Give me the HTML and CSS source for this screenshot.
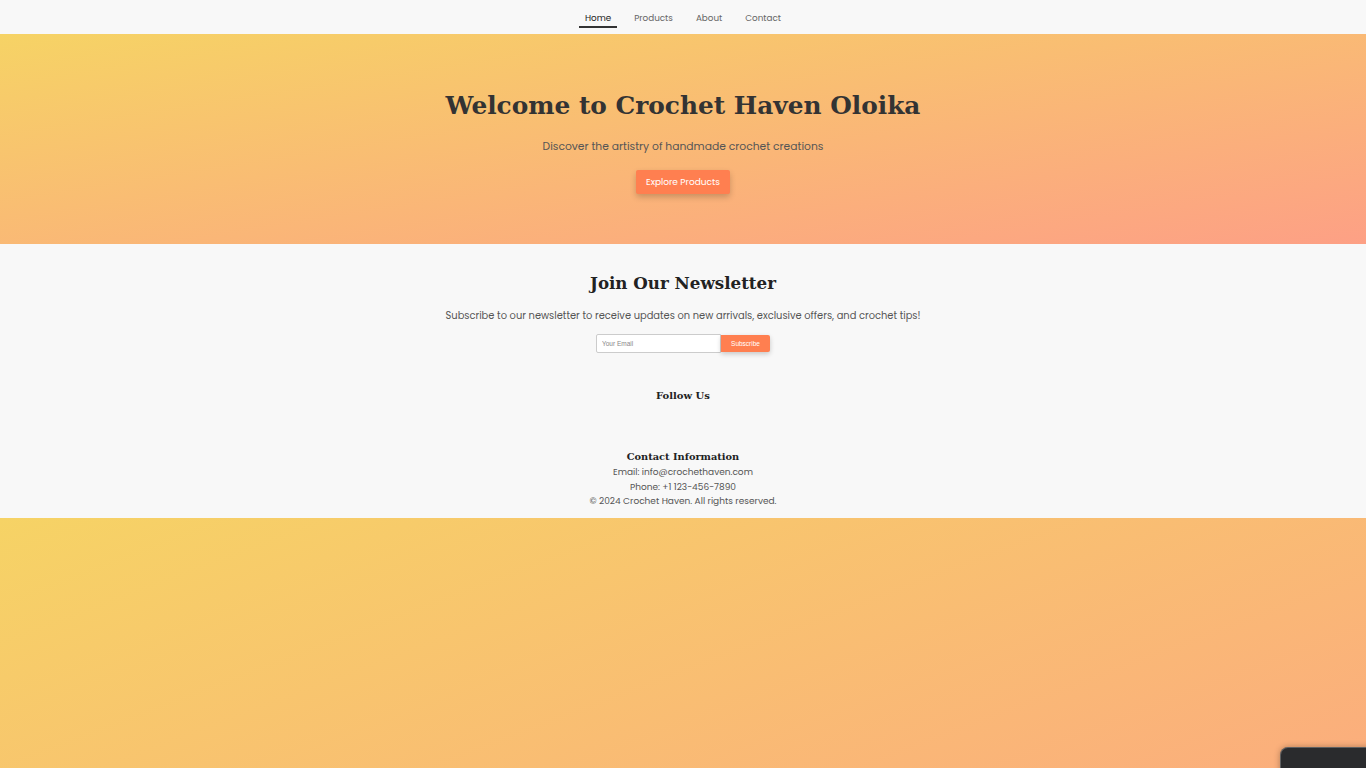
FILE: index.html
```html
<!DOCTYPE html>
<html lang="en">
<head>
<meta charset="utf-8">
<title>Crochet Haven Oloika</title>
<link rel="stylesheet" href="styles.css">
</head>
<body>
<header class="topbar">
  <nav class="nav">
    <a class="nav-link active" href="#">Home</a>
    <a class="nav-link" href="#">Products</a>
    <a class="nav-link" href="#">About</a>
    <a class="nav-link" href="#">Contact</a>
  </nav>
</header>
<section class="hero">
  <h1 class="hero-title">Welcome to Crochet Haven Oloika</h1>
  <p class="hero-sub">Discover the artistry of handmade crochet creations</p>
  <a class="btn-primary" href="#">Explore Products</a>
</section>
<footer class="footer">
  <h2 class="news-title">Join Our Newsletter</h2>
  <p class="news-text">Subscribe to our newsletter to receive updates on new arrivals, exclusive offers, and crochet tips!</p>
  <form class="news-form">
    <input class="news-input" type="email" placeholder="Your Email">
    <button class="news-btn" type="button">Subscribe</button>
  </form>
  <h3 class="follow-title">Follow Us</h3>
  <div class="social"></div>
  <h3 class="contact-title">Contact Information</h3>
  <p class="contact-line">Email: info@crochethaven.com</p>
  <p class="contact-line">Phone: +1 123-456-7890</p>
  <p class="contact-line">© 2024 Crochet Haven. All rights reserved.</p>
</footer>
<div class="widget"></div>
</body>
</html>
```
FILE: styles.css
```css
body {
  margin: 0;
  font-family: "Poppins", "Inter", "Noto Sans", sans-serif;
  color: #333;
  background: linear-gradient(to bottom right, #f6d365, #fda085);
}
.topbar {
  background: #f8f8f8;
  height: 34px;
  display: flex;
  justify-content: center;
  align-items: center;
}
.nav {
  display: flex;
  gap: 11px;
}
.nav-link {
  font-size: 8.8px;
  line-height: 14px;
  color: #666;
  text-decoration: none;
  padding: 4px 6px 1px;
  border-bottom: 2px solid transparent;
}
.nav-link.active {
  color: #222;
  border-bottom-color: #333;
}
.hero {
  height: 210px;
  box-sizing: border-box;
  padding-top: 54px;
  background: linear-gradient(to bottom right, #f6d365, #fda085);
  text-align: center;
}
.hero-title {
  margin: 0;
  font-family: "DejaVu Serif", Georgia, serif;
  font-weight: bold;
  font-size: 24.8px;
  line-height: 36px;
  color: #333;
}
.hero-sub {
  margin: 15px 0 0;
  font-size: 10.75px;
  line-height: 16px;
  color: #555;
}
.btn-primary {
  display: inline-block;
  margin-top: 15px;
  background: #ff7f50;
  color: #fff;
  font-size: 9px;
  line-height: 24px;
  padding: 0 10px;
  border-radius: 2px;
  text-decoration: none;
  box-shadow: 0 3px 6px rgba(0,0,0,0.2);
}
.footer {
  background: #f8f8f8;
  text-align: center;
  padding: 26px 0 9px;
}
.news-title {
  margin: 0;
  font-family: "DejaVu Serif", Georgia, serif;
  font-weight: bold;
  font-size: 16.7px;
  line-height: 26px;
  color: #222;
}
.news-text {
  margin: 13px 0 0;
  font-size: 9.9px;
  line-height: 14px;
  color: #555;
}
.news-form {
  display: flex;
  justify-content: center;
  margin-top: 11px;
}
.news-input {
  width: 125px;
  height: 19px;
  box-sizing: border-box;
  border: 1px solid #ccc;
  border-radius: 2px 0 0 2px;
  padding: 0 5px;
  font-size: 6.5px;
  font-family: "Liberation Sans", sans-serif;
  background: #fff;
}
.news-input::placeholder { color: #888; }
.news-btn {
  width: 49px;
  height: 17px;
  margin-top: 1px;
  border: none;
  border-radius: 0 2px 2px 0;
  background: #ff7f50;
  color: #fff;
  font-size: 6.5px;
  font-family: "Liberation Sans", sans-serif;
  box-shadow: 0 2px 5px rgba(0,0,0,0.2);
  padding: 0;
}
.follow-title {
  margin: 35px 0 0;
  font-family: "DejaVu Serif", Georgia, serif;
  font-weight: bold;
  font-size: 10px;
  line-height: 16px;
  color: #222;
}
.social {
  height: 36px;
}
.contact-title {
  margin: 9px 0 0;
  font-family: "DejaVu Serif", Georgia, serif;
  font-weight: bold;
  font-size: 9.8px;
  line-height: 16px;
  color: #222;
}
.contact-line {
  margin: 0;
  font-size: 9px;
  line-height: 14.5px;
  color: #555;
}
.widget {
  position: fixed;
  right: -10px;
  bottom: -10px;
  width: 96px;
  height: 31px;
  background: #2a2b2d;
  border-radius: 8px;
  box-shadow: 0 0 6px rgba(0,0,0,0.3), 0 0 0 1px rgba(255,255,255,0.25) inset;
}
```
